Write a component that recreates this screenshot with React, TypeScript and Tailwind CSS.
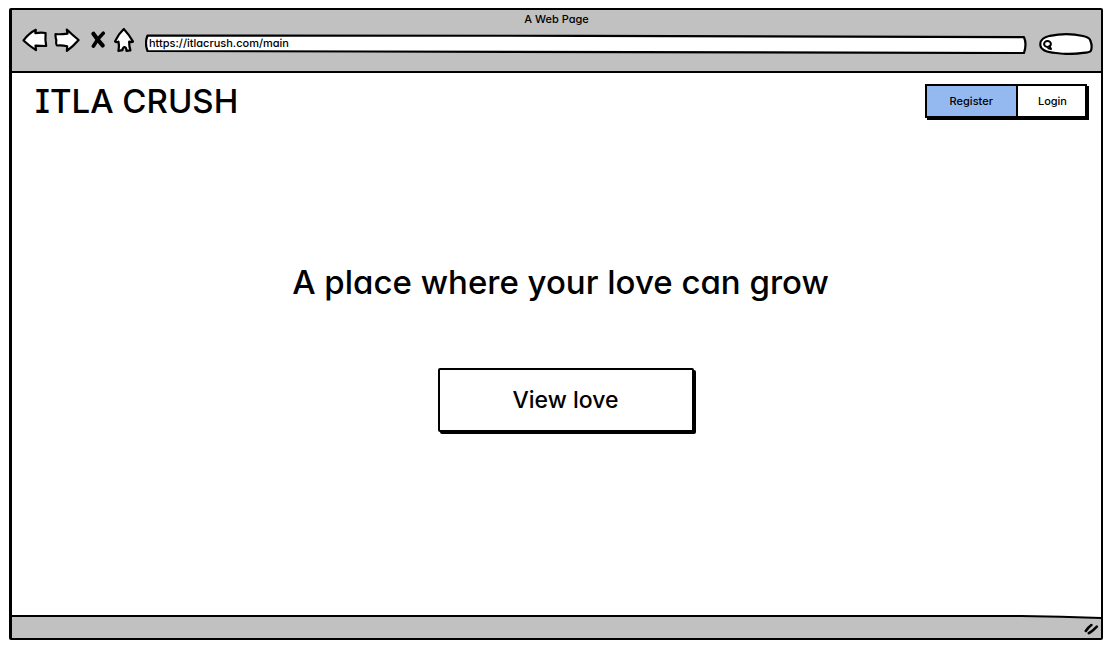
import React from "react";

const ink = {
  fill: "#fff",
  stroke: "#000",
  strokeWidth: 2.2,
  strokeLinejoin: "round",
  strokeLinecap: "round",
} as const;

function BackIcon() {
  return (
    <svg className="h-6 w-[26px]" viewBox="0 0 26 24" aria-hidden="true">
      <path {...ink} d="M1.500 12.500 Q6.500 5.500 13.800 1.800 L13.300 5.200 Q19 4 23.600 5 Q23 12 24.200 18 Q19 18 13.500 17.600 L14 22.200 Q7.500 18 1.500 12.500 Z" />
    </svg>
  );
}

function ForwardIcon() {
  return (
    <svg className="h-6 w-[26px]" viewBox="0 0 26 24" aria-hidden="true">
      <path {...ink} d="M1.600 6 Q6 6.600 13.500 5.600 L12.800 1.500 Q18.500 7 24.600 12 Q19 18.500 12.900 22.900 L13.200 18.300 Q8 17 3.200 17.500 Q1.800 17 2.300 12 Q1.200 9 1.600 6 Z" />
    </svg>
  );
}

function StopIcon() {
  return (
    <svg className="h-[18px] w-4" viewBox="0 0 16 18" aria-hidden="true">
      <g fill="none" stroke="#000" strokeLinecap="round">
        <path strokeWidth="4.200" d="M3.500 2.800 Q7 8 12.600 14.400" />
        <path strokeWidth="3.600" d="M13.200 2.200 Q7.500 7.500 3.400 15.200" />
      </g>
    </svg>
  );
}

function HomeIcon() {
  return (
    <svg className="h-6 w-5" viewBox="0 0 20 24" aria-hidden="true">
      <path {...ink} d="M9.800 1 Q15 6.500 19 13.600 Q17.500 14.600 15.200 13.600 Q15 18 16.400 22.400 L12.500 22.800 Q12.500 19.500 10.500 19 Q8.600 19.500 8.400 22.200 L4.400 22.800 Q5.400 18 4.400 13.600 Q2.500 14.600 1 13.400 Q4 6.500 9.800 1 Z" />
    </svg>
  );
}

function AddressOutline() {
  return (
    <svg className="absolute inset-0 h-full w-full" viewBox="0 0 882 20" preserveAspectRatio="none" aria-hidden="true">
      <path {...ink} vectorEffect="non-scaling-stroke" d="M2.500 1.500 Q220 1 440 1.800 Q660 3 879 3.200 Q882 10 879 19 Q440 19 220 17.500 Q110 17 2.500 17 Q-0.500 9 2.500 1.500 Z" />
    </svg>
  );
}

function SearchOutline() {
  return (
    <svg className="absolute inset-0 h-full w-full" viewBox="0 0 54 22" aria-hidden="true">
      <path {...ink} d="M1.300 11.500 Q1 5 11 2.800 Q28 -0.500 44 3 Q51 4.500 51.500 8 Q53.500 13 52 17.500 Q51 19.600 44 19.800 Q30 22 17 20 Q1.500 19 1.300 11.500 Z" />
      <g fill="none" stroke="#000" strokeWidth="2" strokeLinecap="round">
        <ellipse cx="8.500" cy="11" rx="3.400" ry="3" />
        <path d="M10.500 13.200 L12 16 M9.400 15.400 L12 16" />
      </g>
    </svg>
  );
}

function StatusEdge() {
  return (
    <svg className="block h-1 w-full" viewBox="0 0 1090 4" preserveAspectRatio="none" aria-hidden="true">
      <path fill="#fff" d="M0 0 H1090 V3 Q1050 1.500 1010 1 H0 Z" />
      <path fill="none" stroke="#000" strokeWidth="2" vectorEffect="non-scaling-stroke" d="M0 1 H1010 Q1050 1.500 1090 3" />
    </svg>
  );
}

function Grip() {
  return (
    <svg className="h-3 w-[15px]" viewBox="0 0 15 12" aria-hidden="true">
      <path fill="none" stroke="#000" strokeWidth="2.600" strokeLinecap="round" d="M1.800 8 Q4.500 4 7.400 2 M4.800 10.200 Q8 8.500 12.800 3.600" />
    </svg>
  );
}

export default function App() {
  return (
    <div className="flex min-h-screen flex-col bg-white pt-2 pr-[7px] pb-[14px] pl-[9px] font-['Inter',sans-serif] font-medium text-black [font-feature-settings:'cv11']">
      <div className="flex grow flex-col rounded-[2px] border-2 border-l-[3px] border-black">
        <header className="flex flex-col border-b-2 border-black bg-[#c1c1c1] pb-4">
          <p className="pt-[1px] text-center text-[11px] leading-4">A Web Page</p>
          <div className="flex items-start pr-2 pl-[10px]">
            <nav className="flex items-center pt-[1px]" aria-label="Browser">
              <button type="button" aria-label="Back"><BackIcon /></button>
              <button type="button" aria-label="Forward" className="ml-[6px]"><ForwardIcon /></button>
              <button type="button" aria-label="Stop" className="ml-[10px]"><StopIcon /></button>
              <button type="button" aria-label="Home" className="ml-2"><HomeIcon /></button>
            </nav>
            <div className="relative mt-[7px] ml-[11px] h-5 grow">
              <AddressOutline />
              <input
                type="text"
                aria-label="Address"
                defaultValue="https://itlacrush.com/main"
                className="relative block h-[18px] w-full bg-transparent px-1 text-[11px] leading-4 outline-none"
              />
            </div>
            <div className="relative mt-[6px] ml-3 h-[22px] w-[54px]">
              <SearchOutline />
              <input type="search" aria-label="Search" className="relative h-full w-full bg-transparent pr-2 pl-4 text-[11px] outline-none" />
            </div>
          </div>
        </header>

        <main className="flex grow flex-col">
          <div className="flex items-start justify-between pt-[11px] pr-[14px] pl-[23px]">
            <h1 className="text-[33px] leading-[34px] font-medium [font-feature-settings:'cv08','cv11']">ITLA CRUSH</h1>
            <div className="flex border-2 border-black text-[11px] leading-4 shadow-[2px_2px_0_#000]">
              <button type="button" className="h-[30px] border-r-2 border-black bg-[#94b9f1] px-[23px]">Register</button>
              <button type="button" className="h-[30px] bg-white pr-[18px] pl-5">Login</button>
            </div>
          </div>
          <section className="flex flex-col items-center pt-[140px] pl-2">
            <h2 className="text-center text-[33px] leading-[48px] font-medium">A place where your love can grow</h2>
            <button
              type="button"
              className="mt-[62px] ml-[10px] h-16 w-64 rounded-[2px] border-2 border-black bg-white text-[23px] shadow-[2px_2px_0_#000]"
            >
              View love
            </button>
          </section>
        </main>

        <footer className="h-[23px] bg-[#c1c1c1]">
          <StatusEdge />
          <div className="flex justify-end pt-1 pr-[2px]">
            <Grip />
          </div>
        </footer>
      </div>
    </div>
  );
}
